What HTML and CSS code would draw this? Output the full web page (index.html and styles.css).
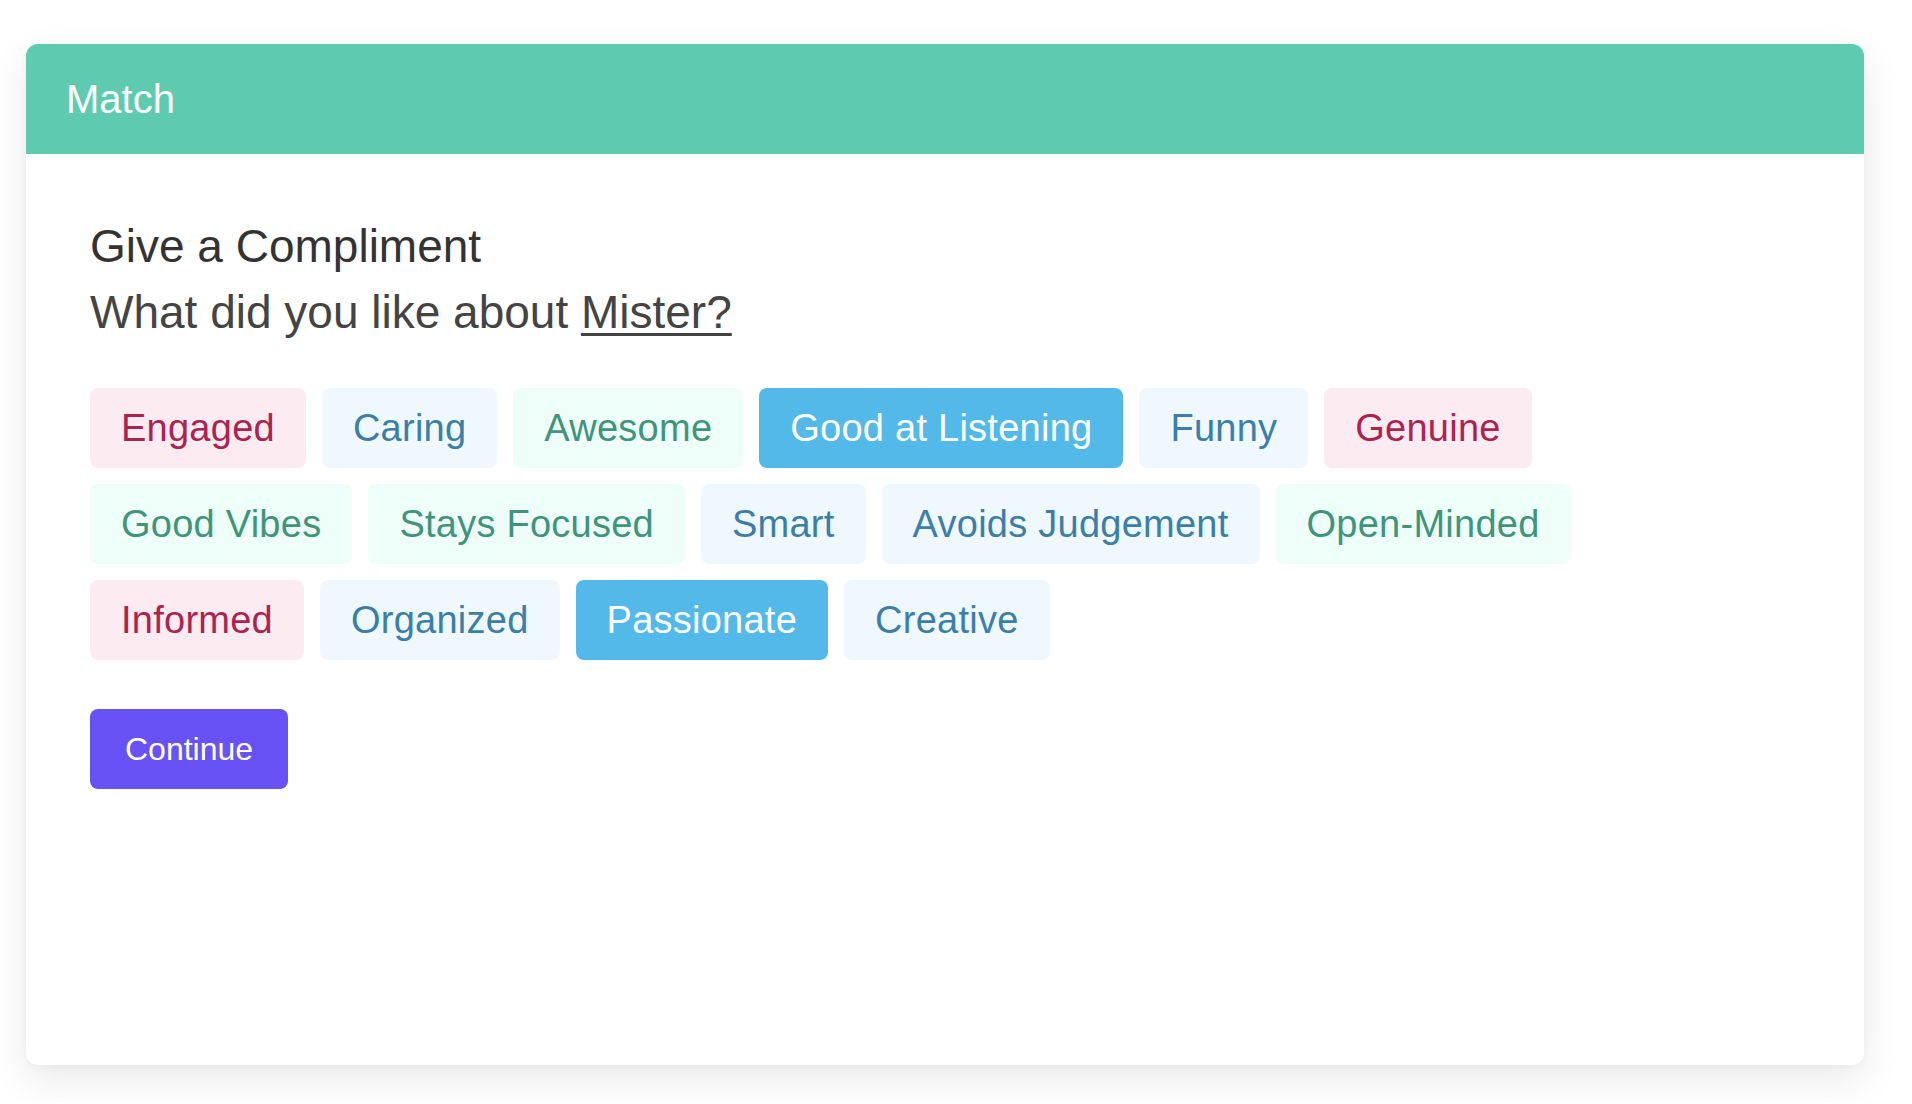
FILE: index.html
```html
<!DOCTYPE html>
<html lang="en">
<head>
<meta charset="utf-8">
<title>Match</title>
<link rel="stylesheet" href="styles.css">
</head>
<body>
<div class="page">
  <section class="card">
    <header class="card-header">Match</header>
    <div class="card-body">
      <h2 class="title">Give a Compliment</h2>
      <p class="subtitle">What did you like about <a class="name" href="#">Mister?</a></p>
      <div class="chips">
        <div class="chip-row">
          <button class="chip pink">Engaged</button>
          <button class="chip blue">Caring</button>
          <button class="chip green">Awesome</button>
          <button class="chip selected">Good at Listening</button>
          <button class="chip blue">Funny</button>
          <button class="chip pink">Genuine</button>
        </div>
        <div class="chip-row">
          <button class="chip green">Good Vibes</button>
          <button class="chip green">Stays Focused</button>
          <button class="chip blue">Smart</button>
          <button class="chip blue">Avoids Judgement</button>
          <button class="chip green">Open-Minded</button>
        </div>
        <div class="chip-row">
          <button class="chip pink">Informed</button>
          <button class="chip blue">Organized</button>
          <button class="chip selected">Passionate</button>
          <button class="chip blue">Creative</button>
        </div>
      </div>
      <button class="continue">Continue</button>
    </div>
  </section>
</div>
</body>
</html>
```

FILE: styles.css
```css
* { box-sizing: border-box; }

html, body {
  margin: 0;
  padding: 0;
  background: #ffffff;
}

body {
  font-family: "Liberation Sans", Arial, sans-serif;
  color: #333333;
}

.page {
  padding: 44px 48px 38px 26px;
}

.card {
  background: #ffffff;
  border-radius: 12px;
  box-shadow: 0 14px 40px rgba(0, 0, 0, 0.09), 0 2px 10px rgba(0, 0, 0, 0.03);
  overflow: hidden;
}

.card-header {
  background: #5ecbb0;
  color: #ffffff;
  height: 110px;
  line-height: 110px;
  padding: 0 40px;
  font-size: 40px;
}

.card-body {
  padding: 59px 63px 276px 64px;
}

.title,
.subtitle {
  margin: 0;
  font-size: 46px;
  font-weight: 400;
  line-height: 66px;
}

.title { color: #333333; }
.subtitle { color: #444444; }

.name {
  color: #444444;
  text-decoration: underline;
  text-decoration-thickness: 3px;
  text-underline-offset: 5px;
}

.chips {
  margin-top: 43px;
  display: flex;
  flex-direction: column;
  gap: 16px;
}

.chip-row {
  display: flex;
  gap: 16px;
}

.chip {
  border: none;
  margin: 0;
  height: 80px;
  padding: 0 31px;
  border-radius: 8px;
  font-family: "Liberation Sans", Arial, sans-serif;
  font-size: 38px;
  letter-spacing: 0.25px;
  line-height: 80px;
  white-space: nowrap;
  cursor: pointer;
}

.chip.pink { background: #fcebf0; color: #ad2350; }
.chip.blue { background: #eff8fe; color: #3b7fa8; }
.chip.green { background: #eefef9; color: #3f957b; }
.chip.selected { background: #53b9e9; color: #ffffff; }

.continue {
  margin-top: 49px;
  border: none;
  height: 80px;
  padding: 0 35px;
  border-radius: 8px;
  background: #6952f5;
  color: #ffffff;
  font-family: "Liberation Sans", Arial, sans-serif;
  font-size: 32px;
  line-height: 80px;
  cursor: pointer;
}
```
